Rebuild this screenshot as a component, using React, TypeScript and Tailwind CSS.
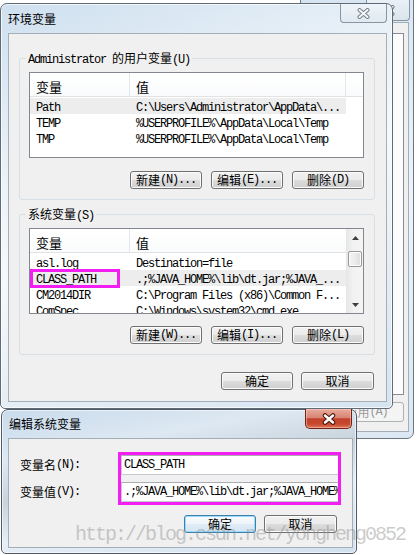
import React from "react";

const CJK_SPLIT = /([\u2E80-\u9FFF\uFF00-\uFFEF\u3000-\u303F]+)/;
const CJK_TEST = /[\u2E80-\u9FFF\uFF00-\uFFEF\u3000-\u303F]/;

function Txt({ s, cjkSize = "text-[12px]" }: { s: string; cjkSize?: string }) {
  const parts = s.split(CJK_SPLIT).filter((p) => p.length > 0);
  return (
    <>
      {parts.map((p, i) =>
        CJK_TEST.test(p) ? (
          <span key={i} className={`font-['Noto_Sans_CJK_SC',sans-serif] ${cjkSize} tracking-normal`}>
            {p}
          </span>
        ) : (
          <span key={i} className="whitespace-pre font-['Liberation_Mono',monospace] text-[12px] tracking-[-1.2px]">
            {p}
          </span>
        )
      )}
    </>
  );
}

function XInactive() {
  return (
    <svg width="13" height="11" viewBox="0 0 13 11">
      <path d="M2.5 2 L10.5 9 M10.5 2 L2.5 9" stroke="#78818a" strokeWidth="4" strokeLinecap="round" fill="none" />
      <path d="M2.5 2 L10.5 9 M10.5 2 L2.5 9" stroke="#f3f6f9" strokeWidth="2" strokeLinecap="round" fill="none" />
    </svg>
  );
}

function XActive() {
  return (
    <svg width="14" height="12" viewBox="0 0 14 12">
      <path d="M3 2.5 L11 9.5 M11 2.5 L3 9.5" stroke="#4a1409" strokeWidth="4.5" strokeLinecap="round" fill="none" />
      <path d="M3 2.5 L11 9.5 M11 2.5 L3 9.5" stroke="#ffffff" strokeWidth="2.5" strokeLinecap="round" fill="none" />
    </svg>
  );
}

function Btn({ label, cls, focus = false }: { label: string; cls: string; focus?: boolean }) {
  return (
    <div
      className={`flex h-[18px] shrink-0 items-center justify-center rounded-[3px] border leading-none text-black ${cls} ${
        focus
          ? "border-[#3c7fb1] bg-[linear-gradient(to_bottom,#f6fbfe_0%,#eef5fa_50%,#e1ecf5_50%,#d6e6f3_100%)] shadow-[inset_0_0_0_1px_#9fdaf8]"
          : "border-[#707070] bg-[linear-gradient(to_bottom,#f2f2f2_0%,#ebebeb_50%,#dddddd_50%,#cfcfcf_100%)] shadow-[inset_0_0_0_1px_#fbfbfb]"
      }`}
    >
      <Txt s={label} />
    </div>
  );
}

function ScrollBar() {
  return (
    <div className="flex w-[17px] shrink-0 flex-col border-l border-[#e6e6e6] bg-[linear-gradient(to_right,#e8e8e8,#f2f2f2_40%,#f4f4f4)]">
      <div className="flex h-[17px] shrink-0 items-center justify-center">
        <svg width="7" height="4" viewBox="0 0 7 4">
          <path d="M0 4 L3.5 0 L7 4 Z" fill="#404040" />
        </svg>
      </div>
      <div className="mx-[1px] mt-[5px] h-[16px] shrink-0 rounded-[2px] border border-[#979797] bg-[linear-gradient(to_right,#f4f4f4,#ebebeb_50%,#dcdcdc)] shadow-[inset_0_0_0_1px_#fdfdfd]" />
      <div className="flex-1" />
      <div className="flex h-[17px] shrink-0 items-center justify-center">
        <svg width="7" height="4" viewBox="0 0 7 4">
          <path d="M0 0 L3.5 4 L7 0 Z" fill="#404040" />
        </svg>
      </div>
    </div>
  );
}

type Row = [string, string];

function ListView({ rows, hi, scroll = false, marker = -1 }: { rows: Row[]; hi: number; scroll?: boolean; marker?: number }) {
  return (
    <div className="flex h-[86px] w-[335px] shrink-0 overflow-hidden border border-[#828790] bg-white">
      <div className="flex min-w-0 flex-1 flex-col">
        <div className="flex h-[24px] shrink-0 border-b border-[#e2e2e2] bg-[linear-gradient(to_bottom,#ffffff,#fafbfc)]">
          <div className="flex w-[100px] shrink-0 items-center border-r border-[#e3e8ee] pl-[6px] pt-[3px]">
            <span className="font-['Noto_Sans_CJK_SC',sans-serif] text-[13px] leading-none">变量</span>
          </div>
          <div className={`flex w-[216px] shrink-0 items-center pl-[6px] pt-[3px] ${scroll ? "" : "border-r border-[#e3e8ee]"}`}>
            <span className="font-['Noto_Sans_CJK_SC',sans-serif] text-[13px] leading-none">值</span>
          </div>
          <div className="flex-1" />
        </div>
        <div className="flex flex-col pt-[1px]">
          {rows.map((r, i) => (
            <div key={i} className={`relative flex h-[16px] w-[316px] shrink-0 items-center leading-[16px] ${i === hi ? "bg-[#ededed]" : ""}`}>
              <div className="w-[100px] shrink-0 overflow-hidden whitespace-pre pl-[6px]">
                <Txt s={r[0]} />
              </div>
              <div className="w-[216px] shrink-0 overflow-hidden whitespace-pre pl-[6px]">
                <Txt s={r[1]} />
              </div>
              {i === marker && (
                <div className="pointer-events-none absolute left-0 top-[-1px] h-[19px] w-[90px] border-[3px] border-[#f21ef2]" />
              )}
            </div>
          ))}
        </div>
      </div>
      {scroll && <ScrollBar />}
    </div>
  );
}

function Group({ label, rows, hi, scroll, marker, btns, cls }: { label: string; rows: Row[]; hi: number; scroll?: boolean; marker?: number; btns: string[]; cls: string }) {
  return (
    <div className={`relative flex shrink-0 flex-col rounded-[3px] border border-[#d5dfe5] pl-[9px] pt-[13px] ${cls}`}>
      <div className="absolute left-[6px] top-[-10px] bg-[#f0f0f0] px-[2px] leading-[16px]">
        <Txt s={label} />
      </div>
      <ListView rows={rows} hi={hi} scroll={scroll} marker={marker} />
      <div className={`flex w-[335px] justify-end gap-[9px] ${scroll ? "mt-[12px]" : "mt-[13px]"}`}>
        <Btn label={btns[0]} cls="w-[72px]" />
        <Btn label={btns[1]} cls="w-[72px]" />
        <Btn label={btns[2]} cls="w-[72px]" />
      </div>
    </div>
  );
}

export default function App() {
  return (
    <div className="relative h-[555px] w-[417px] overflow-hidden bg-white">
      {/* window behind */}
      <div className="absolute left-[300px] top-[-8px] flex h-[447px] w-[114px] flex-col rounded-[7px] border border-[#6b7682] bg-[linear-gradient(160deg,#d6e4f1_0%,#edf3f9_50%,#dbe7f2_100%)]">
        <div className="relative h-[29px] shrink-0">
          <div className="absolute left-[65px] top-[7px] flex h-[21px] w-[44px] items-center justify-center rounded-b-[4px] border border-t-0 border-[#8b959f] bg-[linear-gradient(to_bottom,#e9f0f6,#dbe5ee)]">
            <XInactive />
          </div>
        </div>
        <div className="mb-[6px] ml-[7px] mr-[4px] flex flex-1 flex-col border border-[#a3aeb9] bg-[#f0f0f0] pr-[4px]">
          <div className="mt-[10px] flex-1 border border-[#898c95] bg-[#fcfcfc]" />
          <div className="mb-[9px] mt-[7px] flex justify-end">
            <div className="flex h-[20px] w-[75px] items-center justify-center rounded-[3px] border border-[#adb2b5] bg-[#f4f4f4] text-[#9a9a9a]">
              <span className="font-['Noto_Sans_CJK_SC',sans-serif] text-[12px]">应用</span>
              <span className="whitespace-pre font-['Liberation_Mono',monospace] text-[12px] tracking-[-1.2px]">(A)</span>
            </div>
          </div>
        </div>
      </div>

      {/* main dialog */}
      <div className="absolute left-0 top-[3px] flex h-[406px] w-[393px] flex-col rounded-t-[7px] rounded-b-[5px] border border-[#5f6b77] bg-[linear-gradient(160deg,#cfe0ef_0%,#e9f1f8_30%,#f6f9fc_50%,#e4edf5_75%,#d6e4f0_100%)] shadow-[inset_0_0_0_1px_rgba(255,255,255,0.7)]">
        <div className="relative flex h-[29px] shrink-0 items-center pl-[7px] pt-[1px]">
          <span className="font-['Noto_Sans_CJK_SC',sans-serif] text-[12px] text-black">环境变量</span>
          <div className="absolute right-[5px] top-0 flex h-[19px] w-[47px] items-center justify-center rounded-b-[4px] border border-t-0 border-[#8b959f] bg-[linear-gradient(to_bottom,#eef4f9,#e0e9f1)]">
            <XInactive />
          </div>
        </div>
        <div className="ml-[7px] flex h-[369px] w-[379px] shrink-0 flex-col border border-[#a3aeb9] bg-[#f0f0f0] pl-[10px] pr-[11px] pt-[24px]">
          <Group
            label="Administrator 的用户变量(U)"
            cls="h-[142px]"
            hi={0}
            rows={[
              ["Path", "C:\\Users\\Administrator\\AppData\\..."],
              ["TEMP", "%USERPROFILE%\\AppData\\Local\\Temp"],
              ["TMP", "%USERPROFILE%\\AppData\\Local\\Temp"],
            ]}
            btns={["新建(N)...", "编辑(E)...", "删除(D)"]}
          />
          <Group
            label="系统变量(S)"
            cls="mt-[14px] h-[141px]"
            hi={1}
            scroll
            marker={1}
            rows={[
              ["asl.log", "Destination=file"],
              ["CLASS_PATH", ".;%JAVA_HOME%\\lib\\dt.jar;%JAVA_..."],
              ["CM2014DIR", "C:\\Program Files (x86)\\Common F..."],
              ["ComSpec", "C:\\Windows\\system32\\cmd.exe"],
            ]}
            btns={["新建(W)...", "编辑(I)...", "删除(L)"]}
          />
          <div className="mr-[1px] mt-[17px] flex justify-end gap-[8px]">
            <Btn label="确定" cls="w-[72px]" />
            <Btn label="取消" cls="w-[73px]" />
          </div>
        </div>
      </div>

      {/* edit dialog */}
      <div className="absolute left-[1px] top-[409px] flex h-[145px] w-[356px] flex-col rounded-t-[7px] rounded-b-[5px] border border-[#4f5a66] bg-[linear-gradient(170deg,#c9dbec_0%,#dde8f2_25%,#c9d3dc_45%,#e6eef6_65%,#d2e1ef_100%)] shadow-[inset_0_0_0_1px_rgba(255,255,255,0.6)]">
        <div className="relative flex h-[28px] shrink-0 items-center pl-[7px]">
          <span className="font-['Noto_Sans_CJK_SC',sans-serif] text-[12px] text-black">编辑系统变量</span>
          <div className="absolute right-[4px] top-[-1px] flex h-[20px] w-[47px] items-center justify-center rounded-b-[5px] border border-t-0 border-[#6e2414] bg-[linear-gradient(to_bottom,#e9ab9d_0%,#d98573_45%,#c2402a_52%,#c74a2f_80%,#de7a5c_100%)] shadow-[inset_0_0_0_1px_rgba(255,210,200,0.5)]">
            <XActive />
          </div>
        </div>
        <div className="ml-[6px] flex h-[110px] w-[345px] shrink-0 flex-col border border-[#a3aeb9] bg-[#f0f0f0] pl-[11px] pr-[15px] pt-[16px]">
          <div className="flex">
            <div className="flex w-[101px] shrink-0 flex-col gap-[7px]">
              <div className="flex h-[20px] items-center">
                <Txt s="变量名(N):" />
              </div>
              <div className="flex h-[20px] items-center">
                <Txt s="变量值(V):" />
              </div>
            </div>
            <div className="relative flex w-[218px] shrink-0 flex-col gap-[7px]">
              <div className="flex h-[20px] items-center overflow-hidden whitespace-pre border border-[#c5cad1] border-t-[#abadb3] bg-white pl-[2px]">
                <Txt s="CLASS_PATH" />
              </div>
              <div className="flex h-[20px] items-center overflow-hidden whitespace-pre border border-[#c5cad1] border-t-[#abadb3] bg-white pl-[2px]">
                <Txt s=".;%JAVA_HOME%\lib\dt.jar;%JAVA_HOME%\lib\tools.jar;" />
              </div>
              <div className="pointer-events-none absolute -bottom-[3px] -left-[3px] -right-[2px] -top-[3px] border-[3px] border-[#f21ef2]" />
            </div>
          </div>
          <div className="mt-[13px] flex justify-end gap-[8px]">
            <Btn label="确定" cls="w-[72px]" focus />
            <Btn label="取消" cls="w-[73px]" />
          </div>
        </div>
      </div>

      {/* watermark */}
      <div className="pointer-events-none absolute left-[75px] top-[525px] whitespace-nowrap font-['Liberation_Mono',monospace] text-[20px] leading-[20px] tracking-[-2px] text-[rgba(140,140,140,0.45)]">
        http://blog.csdn.net/yongheng0852
      </div>
    </div>
  );
}
